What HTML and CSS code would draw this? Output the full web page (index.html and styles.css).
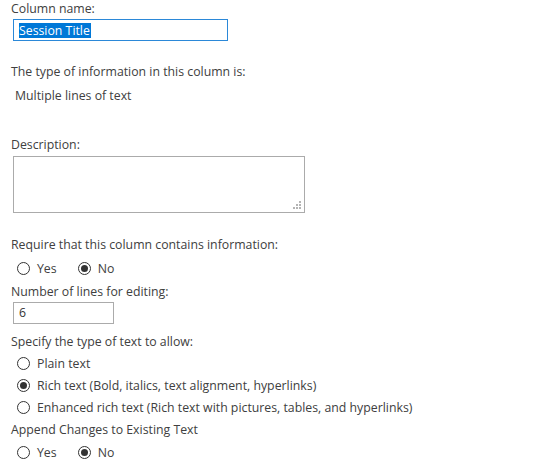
FILE: index.html
```html
<!DOCTYPE html>
<html lang="en">
<head>
<meta charset="utf-8">
<title>Column settings</title>
<link rel="stylesheet" href="styles.css">
</head>
<body>
<form class="form">
  <div class="label">Column name:</div>
  <div class="field name-field"><span class="selected">Session Title</span></div>

  <div class="label type-label">The type of information in this column is:</div>
  <div class="label type-value">Multiple lines of text</div>

  <div class="label desc-label">Description:</div>
  <div class="textarea-wrap">
    <div class="textarea"></div>
    <svg class="grip" width="9" height="9" viewBox="0 0 9 9" aria-hidden="true">
      <rect x="6" y="0" width="2" height="2" fill="#b4b4b4"/>
      <rect x="3" y="3" width="2" height="2" fill="#b4b4b4"/>
      <rect x="6" y="3" width="2" height="2" fill="#b4b4b4"/>
      <rect x="0" y="6" width="2" height="2" fill="#b4b4b4"/>
      <rect x="3" y="6" width="2" height="2" fill="#b4b4b4"/>
      <rect x="6" y="6" width="2" height="2" fill="#b4b4b4"/>
    </svg>
  </div>

  <div class="label req-label">Require that this column contains information:</div>
  <div class="radio-row">
    <label class="radio"><span class="circle"></span>Yes</label>
    <label class="radio"><span class="circle checked"></span>No</label>
  </div>

  <div class="label lines-label">Number of lines for editing:</div>
  <div class="field lines-field">6</div>

  <div class="label spec-label">Specify the type of text to allow:</div>
  <div class="radio-list">
    <label class="radio"><span class="circle"></span>Plain text</label>
    <label class="radio"><span class="circle checked"></span>Rich text (Bold, italics, text alignment, hyperlinks)</label>
    <label class="radio"><span class="circle"></span>Enhanced rich text (Rich text with pictures, tables, and hyperlinks)</label>
  </div>

  <div class="label append-label">Append Changes to Existing Text</div>
  <div class="radio-row last-row">
    <label class="radio"><span class="circle"></span>Yes</label>
    <label class="radio"><span class="circle checked"></span>No</label>
  </div>
</form>
</body>
</html>
```
FILE: styles.css
```css
html, body {
  margin: 0;
  padding: 0;
  background: #ffffff;
}

.form {
  display: flex;
  flex-direction: column;
  align-items: flex-start;
  padding: 0 0 0 11px;
  font-family: "Open Sans", "Noto Sans", sans-serif;
  font-size: 12.3px;
  color: #404040;
}

.label {
  height: 18px;
  line-height: 18px;
  white-space: nowrap;
}

.field {
  box-sizing: border-box;
  height: 22px;
  margin: 1px 0 0 2px;
  padding: 0 0 0 5px;
  border: 1px solid #ababab;
  line-height: 20px;
  color: #333333;
  display: flex;
  align-items: center;
}

.name-field {
  width: 215px;
  border-color: #2b88d8;
}

.selected {
  background: #0078d7;
  color: #ffffff;
  line-height: 15px;
  padding: 0 1px 0 0;
}

.lines-field {
  width: 101px;
}

.type-label { margin-top: 22px; }
.type-value { margin-top: 6px; margin-left: 4px; }
.desc-label { margin-top: 31px; }

.textarea-wrap {
  position: relative;
  margin: 2px 0 0 2px;
}

.textarea {
  box-sizing: border-box;
  width: 292px;
  height: 57px;
  border: 1px solid #ababab;
}

.grip {
  position: absolute;
  right: 3px;
  bottom: 3px;
}

.req-label { margin-top: 23px; }

.radio-row {
  display: flex;
  gap: 21px;
  height: 22px;
  margin-top: 3px;
  padding-left: 6px;
}

.last-row { margin-top: 2px; }

.radio {
  display: flex;
  align-items: center;
  gap: 7px;
  height: 22px;
  white-space: nowrap;
}

.circle {
  box-sizing: border-box;
  width: 13px;
  height: 13px;
  border: 1px solid #333333;
  border-radius: 50%;
  display: flex;
  align-items: center;
  justify-content: center;
  flex: none;
}

.circle.checked::after {
  content: "";
  width: 7px;
  height: 7px;
  border-radius: 50%;
  background: #333333;
}

.lines-label { margin-top: 4px; }
.spec-label { margin-top: 9px; }

.radio-list {
  display: flex;
  flex-direction: column;
  margin-top: 1px;
  padding-left: 6px;
}

.append-label { margin-top: 3px; }
```
